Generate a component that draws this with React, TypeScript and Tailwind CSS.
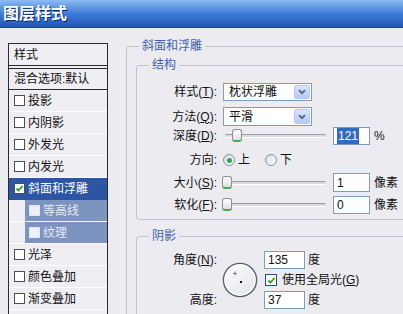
import React from 'react';

type Item = { label: string; checked?: boolean; selected?: boolean; sub?: boolean };

const items: Item[] = [
  { label: '投影' },
  { label: '内阴影' },
  { label: '外发光' },
  { label: '内发光' },
  { label: '斜面和浮雕', checked: true, selected: true },
  { label: '等高线', sub: true },
  { label: '纹理', sub: true },
  { label: '光泽' },
  { label: '颜色叠加' },
  { label: '渐变叠加' },
  { label: '图案叠加' },
  { label: '描边' },
];

const Check = () => (
  <svg width="9" height="9" viewBox="0 0 9 9">
    <path d="M1.5 4.5 L3.5 6.5 L7.5 2" fill="none" stroke="#21a121" strokeWidth="1.8" />
  </svg>
);

const Box = ({ checked, sub }: { checked?: boolean; sub?: boolean }) => (
  <span
    className={`w-[11px] h-[11px] shrink-0 flex items-center justify-center border ${
      sub ? 'border-[#dfe5f2] bg-[#eef1f8]' : 'border-[#4d4d55] bg-white'
    }`}
  >
    {checked && <Check />}
  </span>
);

const Slider = ({ thumb }: { thumb: string }) => (
  <div className="relative w-[104px] h-[14px] shrink-0">
    <div className="absolute left-[3px] right-0 top-[5px] h-[4px] rounded-full border-t border-[#9c9ba3] border-b border-b-white bg-[#dcdbe1]" />
    <div
      className={`absolute top-0 ${thumb} w-[10px] h-[13px] rounded-[3px] border border-[#8b909a] border-b-2 border-b-[#3fae4a] bg-gradient-to-b from-white to-[#dedfe4]`}
    />
  </div>
);

const Input = ({ children, w }: { children: React.ReactNode; w: string }) => (
  <div className={`${w} h-full shrink-0 bg-white border border-[#7f9db9] flex items-center pl-[3px]`}>
    {children}
  </div>
);

const Select = ({ value }: { value: string }) => (
  <div className="w-[89px] h-full bg-white border border-[#7f9db9] flex items-center justify-between pl-[5px] p-px">
    <span>{value}</span>
    <span className="h-full w-[16px] rounded-[2px] border border-[#b2c7f3] bg-gradient-to-b from-[#dbe6fc] to-[#b5c9f4] flex items-center justify-center">
      <svg width="8" height="6" viewBox="0 0 8 6">
        <path d="M1 1.2 L4 4.2 L7 1.2" fill="none" stroke="#4d6185" strokeWidth="1.7" />
      </svg>
    </span>
  </div>
);

const Radio = ({ on }: { on?: boolean }) => (
  <span className="w-[12px] h-[12px] rounded-full border border-[#7d94ad] bg-gradient-to-br from-[#d8d9de] to-white flex items-center justify-center">
    {on && <span className="w-[5px] h-[5px] rounded-full bg-[#2fa84f]" />}
  </span>
);

const Label = ({ children }: { children: React.ReactNode }) => (
  <span className="w-[80px] shrink-0 text-right mr-[5px]">{children}</span>
);

export default function App() {
  return (
    <div className="w-[403px] h-[314px] overflow-hidden bg-[#ecebf0] text-[12px] leading-[16px] text-[#111] [font-family:'Liberation_Sans','Noto_Sans_CJK_SC',sans-serif]">
      {/* title bar */}
      <div className="h-[28px] bg-gradient-to-b from-[#8dbbf1] via-[#3d7cd9] to-[#2455b5] border-b border-[#1d449a] flex items-center pl-[3px]">
        <span className="text-white font-bold text-[16px] leading-none [text-shadow:1px_1px_0_#0a246a]">图层样式</span>
      </div>

      <div className="flex items-start pl-[8px]">
        {/* style list */}
        <div className="mt-[15px] w-[100px] shrink-0 border-x border-t border-[#2b2b2b] bg-[#efeef3]">
          <div className="h-[22px] border-b border-[#2b2b2b] flex items-center pl-[5px]">样式</div>
          <div className="mt-[2px] h-[22px] border-y border-[#2b2b2b] flex items-center pl-[5px]">混合选项:默认</div>
          {items.map((it) =>
            it.sub ? (
              <div key={it.label} className="h-[22px] pl-[16px] border-b border-white">
                <div className="h-full bg-[#7e94c0] text-[#e4e9f4] flex items-center gap-[3px] pl-[4px]">
                  <Box sub />
                  <span>{it.label}</span>
                </div>
              </div>
            ) : (
              <div
                key={it.label}
                className={`h-[22px] border-b flex items-center gap-[3px] pl-[5px] ${
                  it.selected ? 'bg-[#2c55a4] text-white border-[#2c55a4]' : 'border-white'
                }`}
              >
                <Box checked={it.checked} />
                <span>{it.label}</span>
              </div>
            )
          )}
        </div>

        {/* settings */}
        <div className="ml-[18px] mt-[10px] shrink-0">
          <fieldset className="w-[330px] h-[290px] border border-[#c3c2ca] rounded-[3px]">
            <legend className="ml-[12px] px-[3px] text-[#3f62ad]">斜面和浮雕</legend>

            <fieldset className="ml-[9px] mt-[3px] w-[330px] border border-[#c3c2ca] rounded-[3px] pt-[10px] pb-[5px]">
              <legend className="ml-[12px] px-[3px] text-[#3f62ad]">结构</legend>

              <div className="flex items-center h-[18px]">
                <Label>
                  样式(<span className="underline">T</span>):
                </Label>
                <div className="ml-px h-full">
                  <Select value="枕状浮雕" />
                </div>
              </div>

              <div className="flex items-center h-[19px] mt-[6px]">
                <Label>
                  方法(<span className="underline">Q</span>):
                </Label>
                <div className="ml-px h-full">
                  <Select value="平滑" />
                </div>
              </div>

              <div className="flex items-center h-[18px] mt-px">
                <Label>
                  深度(<span className="underline">D</span>):
                </Label>
                <Slider thumb="left-[10px]" />
                <div className="ml-[7px] h-full flex items-center">
                  <Input w="w-[37px]">
                    <span className="bg-[#316ac5] text-white px-px">121</span>
                  </Input>
                  <span className="ml-[4px]">%</span>
                </div>
              </div>

              <div className="flex items-center h-[16px] mt-[7px]">
                <Label>方向:</Label>
                <span className="ml-px flex items-center">
                  <Radio on />
                  <span className="ml-[3px]">上</span>
                  <span className="ml-[15px]">
                    <Radio />
                  </span>
                  <span className="ml-[3px]">下</span>
                </span>
              </div>

              <div className="flex items-center h-[19px] mt-[5px]">
                <Label>
                  大小(<span className="underline">S</span>):
                </Label>
                <Slider thumb="left-0" />
                <div className="ml-[7px] h-full flex items-center">
                  <Input w="w-[37px]">1</Input>
                  <span className="ml-[4px]">像素</span>
                </div>
              </div>

              <div className="flex items-center h-[18px] mt-[4px]">
                <Label>
                  软化(<span className="underline">F</span>):
                </Label>
                <Slider thumb="left-0" />
                <div className="ml-[7px] h-full flex items-center">
                  <Input w="w-[37px]">0</Input>
                  <span className="ml-[4px]">像素</span>
                </div>
              </div>
            </fieldset>

            <fieldset className="ml-[9px] mt-[8px] w-[330px] h-[120px] border border-[#c3c2ca] rounded-[3px] pt-[7px]">
              <legend className="ml-[12px] px-[3px] text-[#3f62ad]">阴影</legend>

              <div className="flex items-start">
                <div className="w-[80px] h-[58px] flex flex-col justify-between text-right leading-[18px]">
                  <span>
                    角度(<span className="underline">N</span>):
                  </span>
                  <span>高度:</span>
                </div>
                <div className="ml-[5px] mt-[11px]">
                  <svg width="36" height="36" viewBox="0 0 36 36">
                    <defs>
                      <linearGradient id="dial" x1="0" y1="0" x2="1" y2="1">
                        <stop offset="0" stopColor="#ffffff" />
                        <stop offset="1" stopColor="#e2e2e8" />
                      </linearGradient>
                    </defs>
                    <circle cx="18" cy="18" r="16.6" fill="url(#dial)" stroke="#5a6070" strokeWidth="1.4" />
                    <circle cx="18" cy="18" r="15.2" fill="none" stroke="#ffffff" strokeWidth="1" />
                    <path d="M13 9.5v4M11 11.5h4" stroke="#666" strokeWidth="0.8" />
                    <rect x="18" y="19" width="2" height="2" fill="#111" />
                  </svg>
                </div>
                <div className="ml-[6px] flex flex-col">
                  <div className="h-[18px] flex items-center">
                    <Input w="w-[41px]">135</Input>
                    <span className="ml-[3px]">度</span>
                  </div>
                  <div className="h-[16px] mt-[3px] flex items-center">
                    <span className="ml-px w-[12px] h-[12px] border border-[#1c5180] bg-white flex items-center justify-center">
                      <Check />
                    </span>
                    <span className="ml-[5px]">
                      使用全局光(<span className="underline">G</span>)
                    </span>
                  </div>
                  <div className="h-[18px] mt-[3px] flex items-center">
                    <Input w="w-[41px]">37</Input>
                    <span className="ml-[3px]">度</span>
                  </div>
                </div>
              </div>
            </fieldset>
          </fieldset>
        </div>
      </div>
    </div>
  );
}
